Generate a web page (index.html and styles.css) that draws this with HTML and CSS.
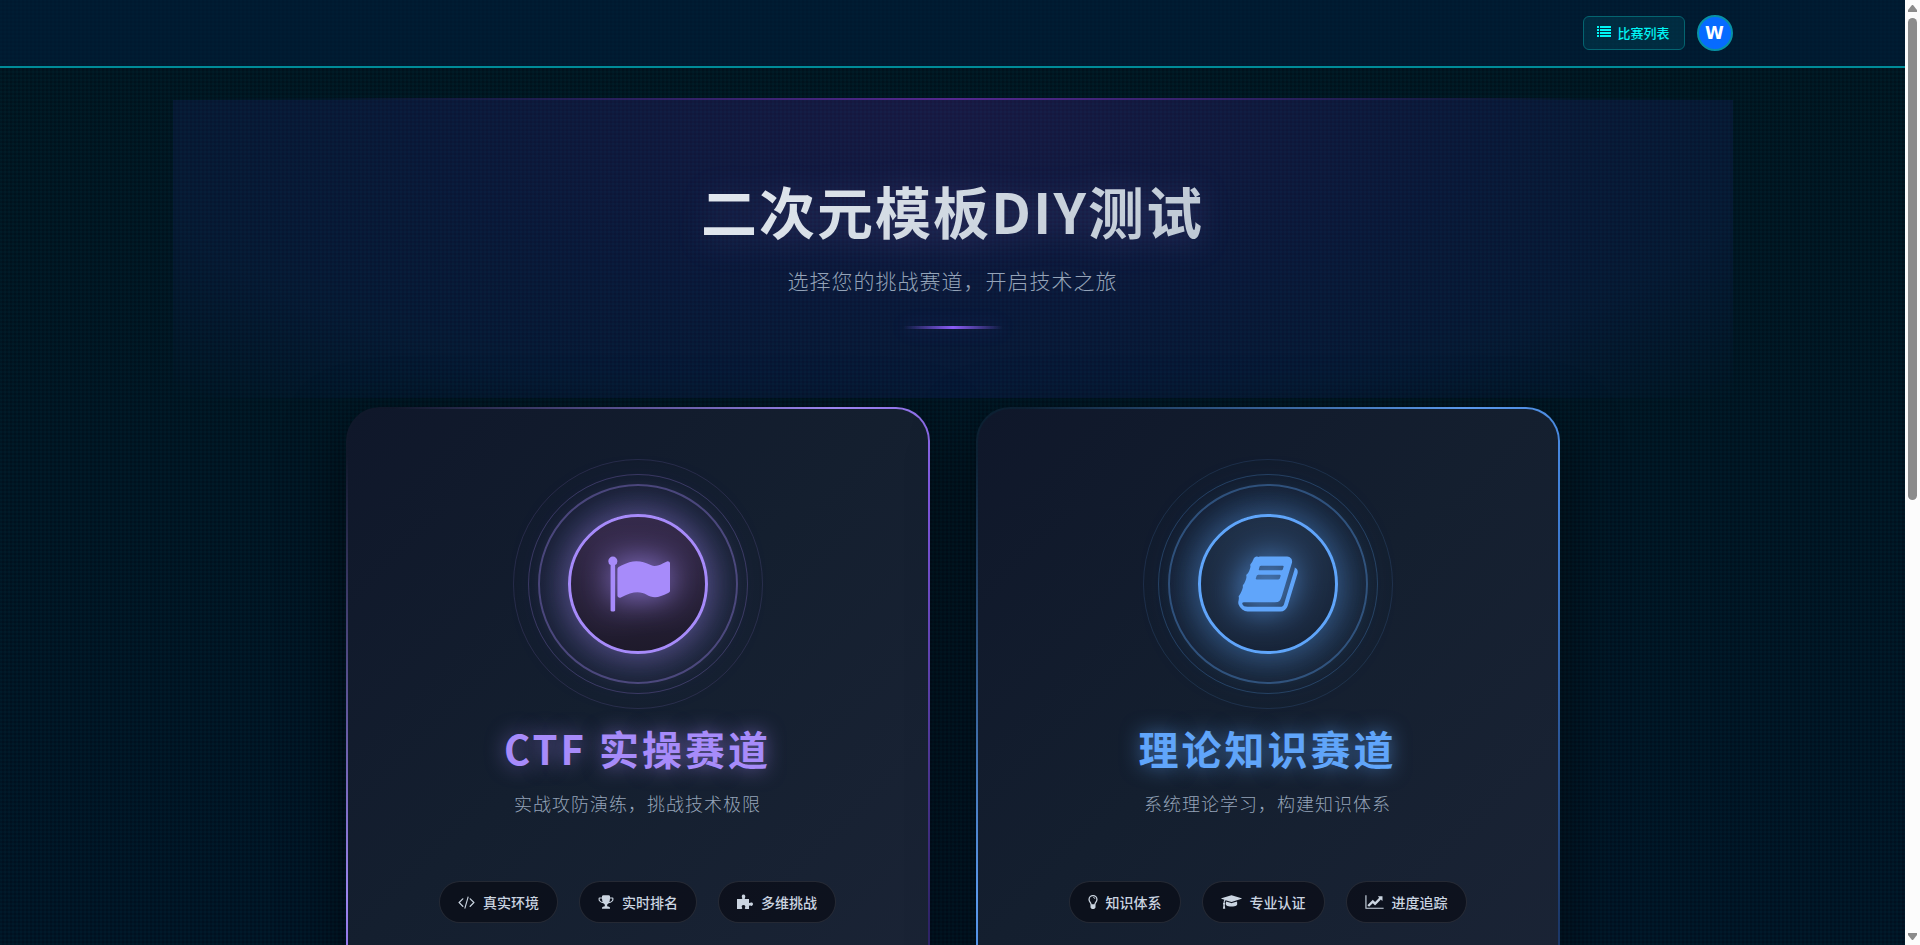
FILE: index.html
```
<!DOCTYPE html>
<html lang="zh-CN">
<head>
  <meta charset="UTF-8">
  <meta name="viewport" content="width=device-width, initial-scale=1.0">
  <title>二次元模板DIY测试</title>
  <link rel="stylesheet" href="styles.css">
</head>
<body>
  <div class="page">
    <header class="navbar">
      <div class="container navbar-inner">
        <a class="nav-btn" href="#games">
          <svg width="14" height="12" viewBox="0 0 14 12" aria-hidden="true">
            <path d="M0 0h2v2H0zM3 0h11v2H3zM0 3h2v2H0zM3 3h11v2H3zM0 6h2v2H0zM3 6h11v2H3zM0 9h2v2H0zM3 9h11v2H3z"/>
          </svg>
          比赛列表
        </a>
        <a class="avatar" href="#profile">W</a>
      </div>
    </header>

    <main class="container">
      <section class="hero">
        <h1>二次元模板DIY测试</h1>
        <p>选择您的挑战赛道，开启技术之旅</p>
        <div class="hero-line"></div>
      </section>

      <section class="tracks">
        <article class="track track-ctf">
          <div class="ring ring-outer">
            <div class="ring ring-middle">
              <div class="ring ring-inner">
                <div class="track-icon">
                  <svg width="64" height="64" viewBox="0 0 1792 1792" aria-hidden="true">
                    <path d="M320 256q0 72-64 110v1266q0 13-9.500 22.500t-22.500 9.500h-64q-13 0-22.500-9.500t-9.500-22.500v-1266q-64-38-64-110 0-53 37.500-90.500t90.500-37.500 90.500 37.500 37.500 90.500zm1472 64v763q0 25-12.500 38.500t-39.500 27.500q-215 116-369 116-61 0-123.500-22t-108.500-48-115.500-48-142.500-22q-192 0-464 146-17 9-33 9-26 0-45-19t-19-45v-742q0-32 31-55 21-14 79-43 236-120 421-120 107 0 200 29t219 88q38 19 88 19 54 0 117.500-21t110-47 88-47 54.500-21q26 0 45 19t19 45z"/>
                  </svg>
                </div>
              </div>
            </div>
          </div>
          <h2>CTF 实操赛道</h2>
          <p>实战攻防演练，挑战技术极限</p>
          <ul class="tags">
            <li>
              <svg width="17" height="16" viewBox="64 0 1920 1792" aria-hidden="true"><path d="M681 1399l-50 50q-10 10-23 10t-23-10l-466-466q-10-10-10-23t10-23l466-466q10-10 23-10t23 10l50 50q10 10 10 23t-10 23l-393 393 393 393q10 10 10 23t-10 23zm591-1067l-373 1291q-4 13-15.500 19.500t-23.500 2.500l-62-17q-13-4-19.500-15.500t-2.500-24.500l373-1291q4-13 15.500-19.500t23.500-2.500l62 17q13 4 19.500 15.500t2.500 24.500zm657 651l-466 466q-10 10-23 10t-23-10l-50-50q-10-10-10-23t10-23l393-393-393-393q-10-10-10-23t10-23l50-50q10-10 23-10t23 10l466 466q10 10 10 23t-10 23z"/></svg>
              真实环境
            </li>
            <li>
              <svg width="16" height="16" viewBox="0 0 1792 1792" aria-hidden="true"><path d="M522 883q-74-162-74-371h-256v96q0 78 94.500 162t235.500 113zm1078-275v-96h-256q0 209-74 371 141-29 235.500-113t94.500-162zm128-128v128q0 71-41.500 143t-112 130-173 97.500-215.500 44.500q-42 54-95 95-38 34-52.500 72.500t-14.500 89.500q0 54 30.500 91t97.500 37q75 0 133.500 45.500t58.500 114.500v64q0 14-9 23t-23 9h-832q-14 0-23-9t-9-23v-64q0-69 58.500-114.500t133.500-45.500q67 0 97.500-37t30.500-91q0-51-14.500-89.500t-52.500-72.500q-53-41-95-95-113-5-215.500-44.500t-173-97.500-112-130-41.500-143v-128q0-40 28-68t68-28h288v-96q0-66 47-113t113-47h576q66 0 113 47t47 113v96h288q40 0 68 28t28 68z"/></svg>
              实时排名
            </li>
            <li>
              <svg width="16" height="16" viewBox="0 0 16 16" aria-hidden="true"><path d="M0 5h4.600c.8 0 .9-.6.5-1.200C4.400 2.600 4.700.5 6.500.5s2.200 2 1.500 3.200c-.5.8-.3 1.300.6 1.300H12v3.200c0 .9.600 1 1.300.6 1.200-.7 2.700-.3 2.700 1.300s-1.500 2.200-2.700 1.500c-.7-.4-1.300-.2-1.300.7V15H8.600c-.8 0-1-.5-.6-1.200.7-1.200.4-2.800-1.500-2.800s-2.200 1.600-1.400 2.800c.4.700.2 1.200-.6 1.200H0z"/></svg>
              多维挑战
            </li>
          </ul>
        </article>

        <article class="track track-theory">
          <div class="ring ring-outer">
            <div class="ring ring-middle">
              <div class="ring ring-inner">
                <div class="track-icon">
                  <svg width="64" height="64" viewBox="0 0 1792 1792" aria-hidden="true">
                    <path d="M1703 478q40 57 18 129l-275 906q-19 64-76.500 107.500t-122.500 43.500h-923q-77 0-148.500-53.500t-99.500-131.500q-24-67-2-127 0-4 3-27t4-37q1-8-3-21.500t-3-19.500q2-11 8-21t16.500-23.500 16.500-23.500q23-38 45-91.500t30-91.500q3-10 .5-30t-.5-28q3-11 17-28t17-23q21-36 42-92t25-90q1-9-2.500-32t.5-28q4-13 22-30.500t22-22.500q19-26 42.500-84.500t27.500-96.500q1-8-3-25.500t-2-26.500q2-8 9-18t18-23 17-21q8-12 16.500-30.500t15-35 16-36 19.500-32 26.500-23.500 36-11.500 47.500 5.500l-1 3q38-9 51-9h761q74 0 114 56t18 130l-274 906q-36 119-71.500 153.500t-128.500 34.500h-869q-27 0-38 15-11 16-1 43 24 70 144 70h923q29 0 56-15.500t35-41.500l300-987q7-22 5-57 38 15 59 43zm-1064 2q-4 13 2 22.500t20 9.500h608q13 0 25.500-9.500t16.500-22.500l21-64q4-13-2-22.500t-20-9.500h-608q-13 0-25.500 9.500t-16.500 22.500zm-83 256q-4 13 2 22.500t20 9.500h608q13 0 25.500-9.500t16.500-22.500l21-64q4-13-2-22.500t-20-9.500h-608q-13 0-25.500 9.500t-16.500 22.500z"/>
                  </svg>
                </div>
              </div>
            </div>
          </div>
          <h2>理论知识赛道</h2>
          <p>系统理论学习，构建知识体系</p>
          <ul class="tags">
            <li>
              <svg width="10" height="16" viewBox="0 0 10 16" aria-hidden="true"><path d="M5 1a4.600 4.600 0 0 1 4.600 4.600c0 2.300-1.900 3.200-2.100 5.200v2.700L6.200 15H3.800l-1.300-1.500v-2.700C2.300 8.800.4 7.900.4 5.600A4.600 4.600 0 0 1 5 1zm0 1.200a3.300 3.300 0 0 0-3.300 3.400c0 1.800 1.600 2.600 2 4.600h2.600c.4-2 2-2.800 2-4.600A3.300 3.300 0 0 0 5 2.200zM5 3c1.300 0 2.300.8 2.300 2h-.7c0-.8-.8-1.300-1.600-1.300z"/></svg>
              知识体系
            </li>
            <li>
              <svg width="21" height="16" viewBox="0 0 2304 1792" aria-hidden="true"><path d="M1774 836l18 316q4 69-82 128t-235 93.500-323 34.500-323-34.500-235-93.500-82-128l18-316 574 181q22 7 48 7t48-7zm530-324q0 23-22 31l-1120 352q-4 1-10 1t-10-1l-652-206q-43 34-71 111.500t-34 178.500q63 36 63 109 0 69-58 107l58 433q2 14-8 25-9 11-24 11h-192q-15 0-24-11-10-11-8-25l58-433q-58-38-58-107 0-73 65-111 11-207 98-330l-333-104q-22-8-22-31t22-31l1120-352q4-1 10-1t10 1l1120 352q22 8 22 31z"/></svg>
              专业认证
            </li>
            <li>
              <svg width="19" height="16" viewBox="0 0 2048 1792" aria-hidden="true"><path d="M2048 1536v128h-2048v-1536h128v1408h1920zm-128-1248v435q0 21-19.500 29.500t-35.500-7.500l-121-121-633 633q-10 10-23 10t-23-10l-233-233-416 416-192-192 585-585q10-10 23-10t23 10l233 233 464-464-121-121q-16-16-7.500-35.500t29.500-19.500h435q14 0 23 9t9 23z"/></svg>
              进度追踪
            </li>
          </ul>
        </article>
      </section>
    </main>
  </div>

  <div class="scrollbar" aria-hidden="true">
    <svg width="9" height="7" viewBox="0 0 9 7"><path d="M4 0h1l4 5v2H0V5z"/></svg>
    <div class="scroll-track"><div class="scroll-thumb"></div></div>
    <svg width="9" height="7" viewBox="0 0 9 7"><path d="M4 7h1l4-5V0H0v2z"/></svg>
  </div>
</body>
</html>
```
FILE: styles.css
```
* {
  box-sizing: border-box;
}
html, body {
  height: 100%;
  margin: 0;
  padding: 0;
}
body {
  display: flex;
  overflow: hidden;
  background: #fcfcfc;
  font-family: "Noto Sans CJK SC", sans-serif;
  color: #e2e8f0;
}
h1, h2, p, ul {
  margin: 0;
  padding: 0;
}
svg {
  display: block;
  flex: none;
  fill: currentColor;
}

/* page with the scan line grid */
.page {
  flex: 1;
  min-width: 0;
  height: 100vh;
  overflow: hidden;
  background:
    repeating-linear-gradient(0deg, rgba(0, 220, 255, 0.025) 0 2px, transparent 2px 4px),
    repeating-linear-gradient(90deg, rgba(0, 220, 255, 0.025) 0 2px, transparent 2px 4px),
    linear-gradient(180deg, #00121c, #001020);
}
.container {
  width: 82%;
  max-width: 1560px;
  margin: 0 auto;
}

/* navbar */
.navbar {
  border-bottom: 2px solid #008b98;
  background: rgba(0, 30, 60, 0.6);
}
.navbar-inner {
  display: flex;
  align-items: center;
  justify-content: flex-end;
  gap: 12px;
  height: 66px;
}
.nav-btn {
  display: flex;
  align-items: center;
  gap: 6px;
  height: 34px;
  padding: 0 14px 2px 13px;
  border: 1px solid #046470;
  border-radius: 6px;
  background: rgba(0, 255, 255, 0.08);
  color: #00f5f5;
  font-size: 13px;
  font-weight: 500;
  text-decoration: none;
}
.avatar {
  display: flex;
  align-items: center;
  justify-content: center;
  width: 36px;
  height: 36px;
  border: 2px solid #0891a4;
  border-radius: 50%;
  background: #066bff;
  color: #fff;
  font: 700 17px "DejaVu Sans", sans-serif;
  text-decoration: none;
}

/* hero */
.hero {
  margin-top: 30px;
  padding: 72px 20px 69px;
  border-top: 2px solid;
  border-image: linear-gradient(90deg, transparent 10%, #55288f, transparent 90%) 1;
  background: radial-gradient(ellipse at top, rgba(100, 40, 180, 0.24), rgba(40, 35, 130, 0.24) 50%, rgba(30, 40, 120, 0.2) 75%, transparent 100%);
  text-align: center;
}
.hero h1 {
  background: linear-gradient(135deg, #f1f5f9 20%, #b0bcca 80%);
  -webkit-background-clip: text;
  background-clip: text;
  color: transparent;
  font-size: 56px;
  font-weight: 700;
  line-height: 76px;
  letter-spacing: 2px;
  filter: drop-shadow(0 4px 16px rgba(167, 139, 250, 0.2));
}
.hero p {
  margin-top: 14px;
  color: #94a3b8;
  font-size: 21px;
  font-weight: 300;
  line-height: 36px;
  letter-spacing: 1px;
}
.hero-line {
  width: 100px;
  height: 3px;
  margin: 28px auto 0;
  background: linear-gradient(90deg, transparent, #8b5cf6, transparent);
  box-shadow: 0 0 20px rgba(139, 92, 246, 0.2);
}

/* track cards */
.tracks {
  display: grid;
  grid-template-columns: 1fr 1fr;
  gap: 46px;
  max-width: 1214px;
  margin: 9px auto 0;
}
.track {
  display: flex;
  flex-direction: column;
  align-items: center;
  min-height: 640px;
  padding: 50px 20px 90px;
  border: 2px solid transparent;
  border-radius: 34px;
  box-shadow: 0 20px 60px rgba(0, 0, 0, 0.5);
}
.track-ctf {
  --accent: #a78bfa;
  --glow: 167, 139, 250;
  --core: linear-gradient(180deg, #352a4b, #1e1a2b);
  background:
    linear-gradient(135deg, #0f172a, #141f2f 45%, #1b2436) padding-box,
    linear-gradient(135deg, #10182a 4%, #9b85ee 40%, #8058e0 55%, #30246a 90%) border-box,
    #10182a;
}
.track-theory {
  --accent: #60a5fa;
  --glow: 96, 165, 250;
  --core: linear-gradient(180deg, #1f3048, #172438);
  background:
    linear-gradient(135deg, #0f172a, #141f2f 45%, #1b2436) padding-box,
    linear-gradient(135deg, #0c2032 4%, #5a98ea 40%, #4080d8 55%, #1b3768 90%) border-box,
    #10182a;
}
.ring {
  display: grid;
  place-items: center;
  border: 1px solid rgba(var(--glow), 0.14);
  border-radius: 50%;
}
.ring-outer {
  width: 250px;
  height: 250px;
}
.ring-middle {
  width: 220px;
  height: 220px;
  border-color: rgba(var(--glow), 0.25);
}
.ring-inner {
  width: 200px;
  height: 200px;
  border: 2px solid rgba(var(--glow), 0.35);
}
.track-icon {
  display: grid;
  place-items: center;
  width: 140px;
  height: 140px;
  border: 3px solid var(--accent);
  border-radius: 50%;
  background: var(--core);
  box-shadow: 0 0 40px rgba(var(--glow), 0.45), 0 0 60px rgba(var(--glow), 0.3);
  color: var(--accent);
}
.track-icon svg {
  filter: drop-shadow(0 0 18px var(--accent));
}
.track h2 {
  margin-top: 10px;
  color: var(--accent);
  font-size: 40px;
  font-weight: 700;
  line-height: 58px;
  letter-spacing: 3px;
  text-shadow: 0 0 20px rgba(var(--glow), 0.6);
}
.track p {
  margin-top: 10px;
  color: #94a3b8;
  font-size: 18px;
  font-weight: 300;
  line-height: 32px;
  letter-spacing: 1px;
}
.tags {
  display: flex;
  justify-content: center;
  gap: 21px;
  margin-top: 62px;
  list-style: none;
}
.tags li {
  display: flex;
  align-items: center;
  gap: 8px;
  height: 42px;
  padding: 0 18px;
  border: 1px solid rgba(255, 255, 255, 0.1);
  border-radius: 21px;
  background: rgba(5, 5, 12, 0.55);
  color: #cbd5e1;
  font-size: 14px;
  font-weight: 500;
  white-space: nowrap;
}

/* scroll bar at the window edge */
.scrollbar {
  display: flex;
  flex-direction: column;
  align-items: center;
  flex: none;
  width: 15px;
  height: 100vh;
  padding: 5px 0;
  color: #8b8b8b;
}
.scroll-track {
  flex: 1;
  padding: 6px 0;
}
.scroll-thumb {
  width: 9px;
  height: 53%;
  border-radius: 5px;
  background: #8b8b8b;
}
```
